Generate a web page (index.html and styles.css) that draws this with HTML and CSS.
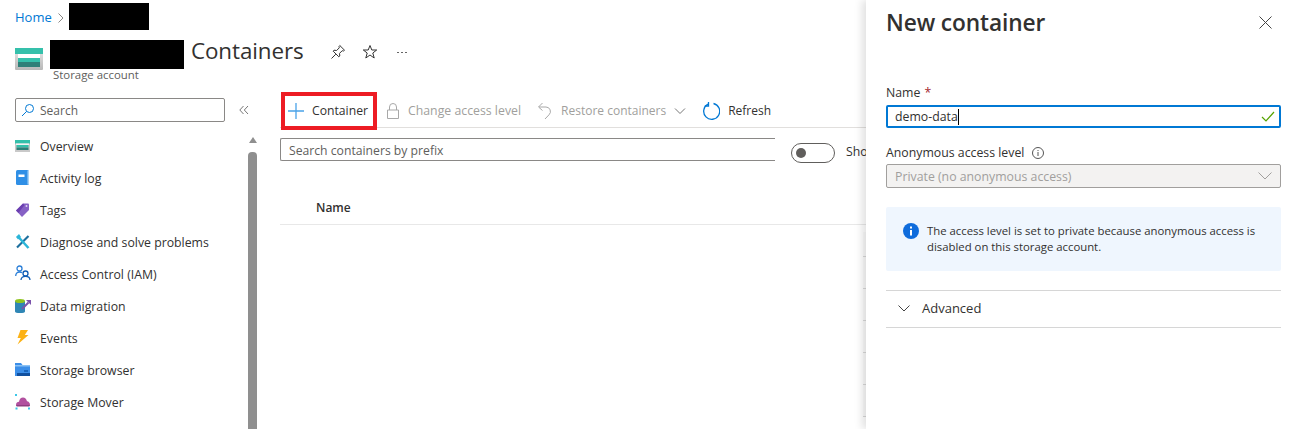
FILE: index.html
```html
<!DOCTYPE html>
<html lang="en">
<head>
<meta charset="utf-8">
<title>Containers</title>
<link rel="stylesheet" href="styles.css">
</head>
<body>
<div class="page">
  <div class="crumbs">
    <a class="crumb-link">Home</a>
    <svg class="crumb-sep" width="8" height="12" viewBox="0 0 8 12"><path d="M1.500 1.500 6 6l-4.500 4.500" fill="none" stroke="#8a8886"/></svg>
    <span class="redact redact-crumb"></span>
  </div>
  <header class="title-row">
    <svg class="res-icon" width="28" height="26" viewBox="0 0 28 26">
      <defs><linearGradient id="sg" x1="0" y1="0" x2="0" y2="1"><stop offset="0" stop-color="#e8e8e8"/><stop offset="1" stop-color="#b8b8b8"/></linearGradient></defs>
      <rect x="0" y="2" width="28" height="22" rx="1" fill="url(#sg)"/>
      <rect x="0" y="2" width="28" height="6" fill="#35c0ab"/>
      <rect x="3" y="8" width="22" height="13" fill="#fff"/>
      <rect x="3" y="12" width="22" height="4" fill="#35c0ab"/>
      <rect x="3" y="16" width="22" height="5" fill="#2f7f78"/>
    </svg>
    <div class="title-text">
      <div class="title-line">
        <span class="redact redact-title"></span>
        <h1 class="page-title">Containers</h1>
      </div>
      <div class="subtitle">Storage account</div>
    </div>
    <div class="title-actions">
      <svg width="16" height="16" viewBox="0 0 16 16"><path d="M9.800 1.500 14.500 6.200 13.500 7 12.200 6.700 9.500 9.400 9.800 12 8.800 12.800 3.200 7.200 4 6.200 6.600 6.500 9.300 3.800 9 2.500ZM5.800 10.200 1.500 14.500" fill="none" stroke="#333"/></svg>
      <svg width="16" height="16" viewBox="0 0 16 16"><path d="M8 1.500 9.800 6H14.700L10.800 9 12.200 14 8 11 3.800 14 5.200 9 1.300 6H6.200Z" fill="none" stroke="#333"/></svg>
      <span class="more"><i></i><i></i><i></i></span>
    </div>
  </header>
  <div class="workspace">
    <aside class="sidebar">
      <div class="side-search-row">
        <div class="side-search">
          <svg width="14" height="14" viewBox="0 0 14 14"><circle cx="8.500" cy="5.500" r="4" fill="none" stroke="#0078d4"/><path d="M5.500 8.500 1 13" stroke="#0078d4" fill="none"/></svg>
          <span>Search</span>
        </div>
        <svg class="collapse" width="10" height="10" viewBox="0 0 10 10"><path d="M4.500 1 .8 5l3.700 4M9 1 5.300 5 9 9" fill="none" stroke="#777"/></svg>
      </div>
      <div class="side-body">
        <nav class="nav">
          <a class="nav-item">
            <svg class="nav-icon" width="18" height="18" viewBox="0 0 18 18"><rect x="0" y="3" width="15" height="12" fill="#c9c9c9"/><rect x="0" y="3" width="15" height="3.500" fill="#35c0ab"/><rect x="1" y="6.500" width="13" height="1.500" fill="#f4f4f4"/><rect x="1.500" y="8" width="12" height="2.500" fill="#35c0ab"/><rect x="1.500" y="10.500" width="12" height="2.500" fill="#2f7f78"/></svg>
            <span>Overview</span>
          </a>
          <a class="nav-item">
            <svg class="nav-icon" width="18" height="18" viewBox="0 0 18 18"><rect x="1" y="1" width="13" height="15" rx="1.500" fill="#2f8fe6"/><rect x="12.500" y="1.500" width="1.500" height="14" fill="#a9d3f5"/><rect x="3.500" y="5.500" width="6" height="2.500" fill="#fff"/></svg>
            <span>Activity log</span>
          </a>
          <a class="nav-item">
            <svg class="nav-icon" width="18" height="18" viewBox="0 0 18 18"><path d="M1 9.500 8 2.500H13a1 1 0 0 1 1 1V9L7 16Z" fill="#8661c5"/><path d="M1 9.500 8 2.500 9.500 4 3.500 12Z" fill="#6b3fb0"/><circle cx="11.500" cy="5" r="1" fill="#e0d4f2"/></svg>
            <span>Tags</span>
          </a>
          <a class="nav-item">
            <svg class="nav-icon" width="18" height="18" viewBox="0 0 18 18"><path d="M2 14.500 13.500 3" stroke="#1c6f9e" stroke-width="2.200"/><path d="M2.500 3 13.500 15" stroke="#2bb5d8" stroke-width="2.500"/><path d="M1 4 4 1l2 3-3 2.500Z" fill="#2bb5d8"/></svg>
            <span>Diagnose and solve problems</span>
          </a>
          <a class="nav-item">
            <svg class="nav-icon" width="18" height="18" viewBox="0 0 18 18"><g fill="none" stroke-width="1.300"><circle cx="4.500" cy="3.500" r="2.500" stroke="#2b7fd8"/><path d="M.7 11c0-3 1.800-4 3.800-4 1 0 1.800.2 2.500.8" stroke="#2b7fd8"/><circle cx="10.500" cy="8.500" r="2.500" stroke="#0f5cb5"/><path d="M6 15c0-2.500 2-3.700 4.500-3.700S15 12.500 15 15" stroke="#0f5cb5"/></g></svg>
            <span>Access Control (IAM)</span>
          </a>
          <a class="nav-item">
            <svg class="nav-icon" width="18" height="18" viewBox="0 0 18 18"><path d="M0 4V14.500c0 1 2 1.500 5 1.500s5-.5 5-1.500V4Z" fill="#2f86b5"/><ellipse cx="5" cy="4" rx="5" ry="2" fill="#8fc31f"/><path d="M7 12 13.500 5.500" stroke="#7b52ab" stroke-width="2"/><path d="M11 3h5v5Z" fill="#7b52ab"/></svg>
            <span>Data migration</span>
          </a>
          <a class="nav-item">
            <svg class="nav-icon" width="18" height="18" viewBox="0 0 18 18"><path d="M5.500 1H13L9.800 6H13.500L2.500 15.500 5.800 9H2.500Z" fill="#fcb216"/></svg>
            <span>Events</span>
          </a>
          <a class="nav-item">
            <svg class="nav-icon" width="18" height="18" viewBox="0 0 18 18"><path d="M0 2h6l1.500 2H15V15H0Z" fill="#3b8ee8"/><rect x="0" y="4" width="15" height="1.500" fill="#8cc2f4"/><rect x="2" y="12" width="13" height="3" fill="#10509f"/><rect x="9" y="9" width="4" height="2" fill="#1a66bd"/></svg>
            <span>Storage browser</span>
          </a>
          <a class="nav-item">
            <svg class="nav-icon" width="18" height="18" viewBox="0 0 18 18"><path d="M1 12c0-2 1.500-3.200 3-3.200C4.400 6 6 4.500 8 4.500c2 0 3.500 1.300 4 3.800 1.800.1 3 1.700 3 3.700Z" fill="#b2509f"/><path d="M1 12h14c0 1-.8 1.500-1.800 1.500H2.800C1.800 13.500 1 13 1 12Z" fill="#8f3d80"/><g fill="#3cc6e8"><rect x="0" y="1" width="2" height="2"/><rect x=".5" y="14.500" width="2" height="2"/><rect x="13" y="14.500" width="2" height="2"/></g></svg>
            <span>Storage Mover</span>
          </a>
        </nav>
        <div class="scrollbar">
          <span class="scroll-up"></span>
          <span class="scroll-thumb"></span>
        </div>
      </div>
    </aside>
    <main class="main">
      <div class="toolbar">
        <button class="tool tool-primary">
          <svg width="16" height="16" viewBox="0 0 16 16"><path d="M8 0v16M0 8h16" stroke="#4aa3e8" stroke-width="1.300"/></svg>
          <span>Container</span>
        </button>
        <button class="tool tool-off tool-lock">
          <svg width="14" height="18" viewBox="0 0 14 18"><path d="M1.500 8h11v8.500h-11ZM3.500 8V5a3.500 3.500 0 0 1 7 0v3" fill="none" stroke="#a8a8a8"/></svg>
          <span>Change access level</span>
        </button>
        <button class="tool tool-off tool-restore">
          <svg width="16" height="18" viewBox="0 0 16 18"><path d="M5.500 1 1.500 5l4 3.500M2 5h7a4.500 4.500 0 0 1 3 7.800L8 17" fill="none" stroke="#a8a8a8"/></svg>
          <span>Restore containers</span>
          <svg class="tool-chev" width="12" height="8" viewBox="0 0 12 8"><path d="M1 1.500 6 6.500 11 1.500" fill="none" stroke="#777"/></svg>
        </button>
        <button class="tool tool-refresh">
          <svg width="18" height="18" viewBox="0 0 18 18"><path d="M6 2.200A8 8 0 1 0 11.500 1.500" fill="none" stroke="#0078d4" stroke-width="1.300"/><path d="M6.500 0v4H2.800" fill="none" stroke="#0078d4" stroke-width="1.300"/></svg>
          <span>Refresh</span>
        </button>
      </div>
      <div class="filters">
        <div class="prefix">Search containers by prefix</div>
        <span class="toggle"><i></i></span>
        <span class="toggle-label">Sho</span>
      </div>
      <div class="table-head"><span>Name</span></div>
      <div class="table-rows"><div></div><div></div><div></div><div></div><div></div><div></div></div>
    </main>
  </div>
</div>
<section class="blade">
  <div class="blade-head">
    <h2 class="blade-title">New container</h2>
    <svg width="13" height="13" viewBox="0 0 13 13"><path d="M.5.500l12 12M12.500.500l-12 12" stroke="#444" fill="none"/></svg>
  </div>
  <label class="field-label field-name">Name <em>*</em></label>
  <div class="text-input">
    <span class="value">demo-data</span><span class="caret"></span>
    <svg class="check" width="14" height="11" viewBox="0 0 14 11"><path d="M1 6l4 4 8-9" fill="none" stroke="#57a300" stroke-width="1.200"/></svg>
  </div>
  <label class="field-label field-access">Anonymous access level
    <svg width="12" height="12" viewBox="0 0 12 12"><circle cx="6" cy="6" r="5.500" fill="none" stroke="#555"/><path d="M6 5v4M6 3v1" stroke="#555"/></svg>
  </label>
  <div class="select-box">
    <span>Private (no anonymous access)</span>
    <svg width="14" height="8" viewBox="0 0 14 8"><path d="M.5.500 7 7 13.500.500" fill="none" stroke="#a19f9d"/></svg>
  </div>
  <div class="info">
    <svg width="16" height="16" viewBox="0 0 16 16"><circle cx="8" cy="8" r="8" fill="#0f6cdc"/><rect x="7" y="7" width="2" height="5.500" fill="#fff"/><rect x="7" y="3.500" width="2" height="2" fill="#fff"/></svg>
    <p>The access level is set to private because anonymous access is disabled on this storage account.</p>
  </div>
  <div class="advanced">
    <svg width="12" height="7" viewBox="0 0 12 7"><path d="M.5.500 6 6 11.500.500" fill="none" stroke="#444"/></svg>
    <span>Advanced</span>
  </div>
</section>
</body>
</html>
```

FILE: styles.css
```css
* { box-sizing: border-box; }
html, body { margin: 0; height: 429px; overflow: hidden; background: #fff; }
body { font-family: "Open Sans", "Noto Sans", sans-serif; font-size: 12.3px; color: #323130; position: relative; }
.page { width: 866px; height: 429px; overflow: hidden; display: flex; flex-direction: column; }

.crumbs { height: 34px; padding: 3px 0 0 15px; display: flex; align-items: flex-start; flex: none; }
.crumb-link { color: #0078d4; font-size: 13px; line-height: 28px; }
.crumb-sep { margin: 9px 4px 0 5px; }
.redact { display: block; background: #000; }
.redact-crumb { width: 80px; height: 27px; }

.title-row { height: 50px; flex: none; display: flex; padding: 6px 0 0 15px; position: relative; }
.res-icon { margin-top: 6px; flex: none; }
.title-text { margin-left: 7px; }
.title-line { display: flex; align-items: flex-start; height: 29px; }
.redact-title { width: 134px; height: 29px; }
.page-title { margin: -3px 0 0 7px; font-size: 22.4px; line-height: 28px; font-weight: 400; color: #323130; letter-spacing: -.1px; white-space: nowrap; }
.subtitle { font-size: 11.400px; color: #605e5c; line-height: 13px; margin: -1px 0 0 3px; }
.title-actions { display: flex; align-items: center; gap: 16px; margin: -3px 0 0 26px; height: 30px; }
.more { display: flex; gap: 2px; margin-left: 3px; }
.more i { width: 2px; height: 1px; background: #666; display: block; }

.workspace { flex: 1; display: flex; min-height: 0; }
.sidebar { width: 280px; flex: none; padding: 14px 0 0 15px; display: flex; flex-direction: column; }
.side-search-row { display: flex; align-items: center; height: 24px; flex: none; }
.side-search { width: 210px; height: 24px; border: 1px solid #8a8886; border-radius: 2px; display: flex; align-items: center; padding-left: 5px; gap: 5px; color: #605e5c; font-size: 12px; }
.collapse { margin-left: 14px; }
.side-body { flex: 1; display: flex; margin-top: 8px; min-height: 0; }
.nav { width: 233px; flex: none; display: flex; flex-direction: column; }
.nav-item { height: 32px; flex: none; display: flex; align-items: center; gap: 7px; color: #323130; }
.nav-icon { flex: none; }
.scrollbar { width: 9px; margin-top: 6px; display: flex; flex-direction: column; align-items: center; background: #fff; }
.scroll-up { width: 0; height: 0; border-left: 4.500px solid transparent; border-right: 4.500px solid transparent; border-bottom: 6px solid #8f8f8f; margin-top: 1px; }
.scroll-thumb { width: 9px; flex: 1; background: #8f8f8f; border-radius: 4px 4px 0 0; margin-top: 9px; }

.main { flex: 1; min-width: 0; position: relative; }
.toolbar { height: 44px; display: flex; align-items: center; border-bottom: 1px solid #e1dfdd; padding: 10px 0 0 1px; margin-bottom: 10px; }
.tool { display: flex; align-items: center; border: 0; background: none; font: inherit; padding: 0; height: 38px; white-space: nowrap; }
.tool-primary { width: 96px; border: 4px solid #ed1c24; padding-left: 3px; gap: 8px; color: #323130; font-size: 12.2px; }
.tool-off { color: #a19f9d; gap: 8px; }
.tool-lock { margin-left: 9px; font-size: 12.300px; }
.tool-restore { margin-left: 16px; font-size: 12px; }
.tool-chev { margin-left: 0; }
.tool-refresh { margin-left: 16px; gap: 8px; color: #323130; font-size: 12px; }

.filters { display: flex; align-items: flex-start; height: 23px; }
.prefix { width: 495px; height: 23px; border: 1px solid #8a8886; border-right: 0; border-radius: 2px 0 0 2px; padding-left: 8px; line-height: 23px; color: #605e5c; flex: none; font-size: 12.2px; }
.toggle { width: 44px; height: 20px; border: 1px solid #605e5c; border-radius: 10px; margin: 5px 0 0 16px; flex: none; display: flex; align-items: center; padding-left: 4px; }
.toggle i { width: 10px; height: 10px; background: #605e5c; border-radius: 50%; display: block; }
.toggle-label { margin: 5px 0 0 11px; white-space: nowrap; line-height: 18px; }

.table-head { height: 35px; border-bottom: 1px solid #e8e8e8; margin-top: 29px; padding-left: 36px; display: flex; align-items: center; }
.table-head span { font-weight: 600; font-size: 12px; }
.table-rows { margin: 7px 0 0 auto; width: 3px; background: #fafafa; }
.table-rows div { height: 32px; border-bottom: 1px solid #d8d8d8; }
.table-rows div:first-child { height: 25px; }

.blade { position: absolute; left: 866px; top: 0; width: 424px; height: 429px; background: #fff; box-shadow: -4px 0 8px rgba(0,0,0,.12); padding: 0 9px 0 20px; }
.blade-head { height: 44px; display: flex; justify-content: space-between; align-items: center; padding-right: 9px; }
.blade-title { margin: 0; font-size: 22.700px; font-weight: 600; color: #323130; letter-spacing: -.1px; }
.field-label { display: flex; align-items: center; gap: 4px; color: #323130; line-height: 16px; }
.field-label em { color: #a4262c; font-style: normal; }
.field-name { margin-top: 41px; }
.text-input { height: 23px; margin-top: 4px; border: 2px solid #0078d4; border-radius: 2px; display: flex; align-items: center; padding-left: 7px; position: relative; }
.caret { width: 1px; height: 16px; background: #000; }
.check { position: absolute; right: 4px; top: 4px; }
.field-access { margin-top: 17px; gap: 8px; }
.select-box { height: 24px; margin-top: 3px; background: #f3f2f1; border: 1px solid #a19f9d; border-radius: 2px; display: flex; align-items: center; justify-content: space-between; padding: 0 8px; color: #a19f9d; }
.info { margin-top: 19px; height: 64px; background: #eff6fe; border-radius: 2px; display: flex; align-items: center; gap: 8px; padding: 0 17px; }
.info svg { flex: none; margin-top: -16px; }
.info p { margin: 0; font-size: 11.350px; line-height: 16px; }
.advanced { margin-top: 19px; height: 38px; border-top: 1px solid #d6d6d6; border-bottom: 1px solid #d6d6d6; display: flex; align-items: center; gap: 12px; padding: 0 0 2px 12px; font-size: 13px; }
```
